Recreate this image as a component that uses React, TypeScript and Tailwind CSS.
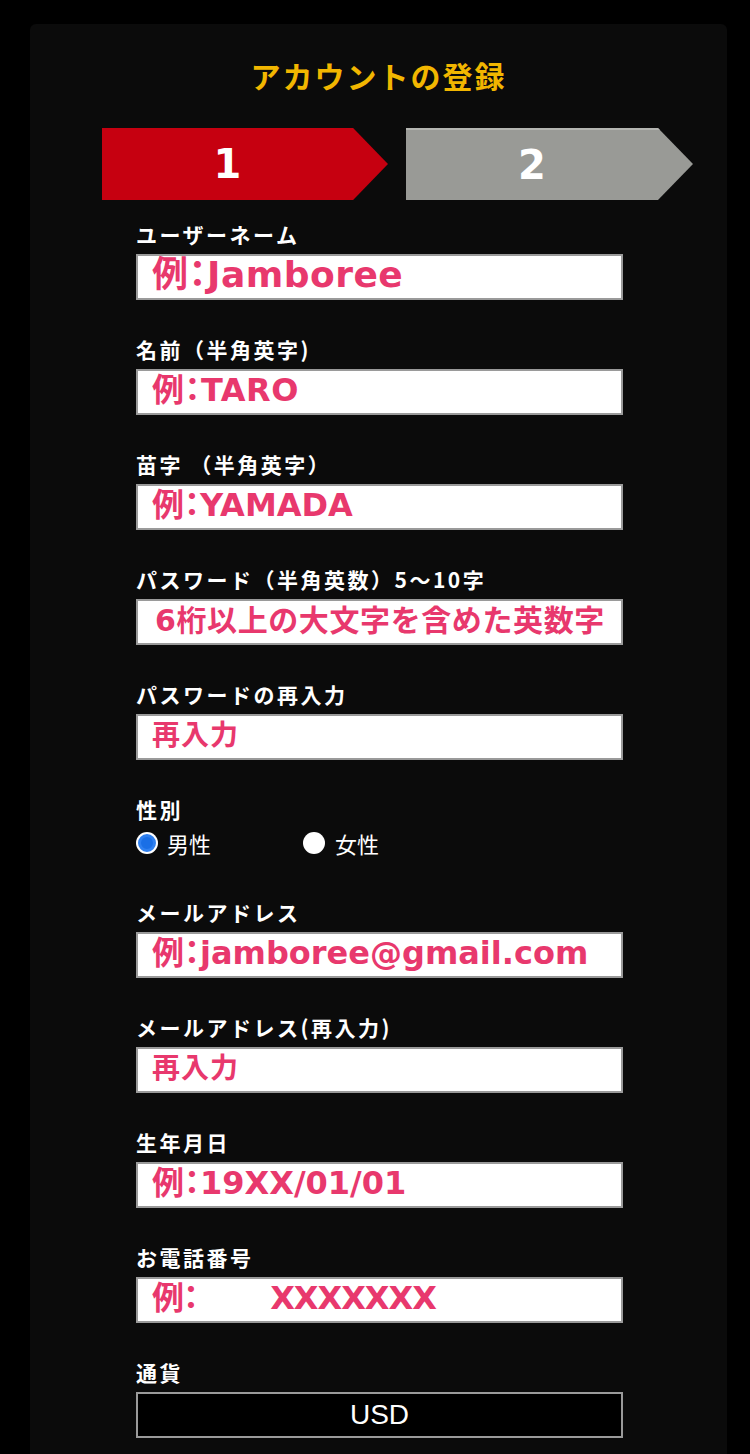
import React from 'react';

const labelCls =
  "block h-[24px] leading-[24px] text-[21px] font-bold tracking-[2.5px] text-white font-['Noto_Sans_CJK_JP',sans-serif]";

const inputBase =
  "mt-[8px] block w-full h-[46px] bg-white border-2 border-[#9a9a9a] pl-[14px] pb-[4px] font-bold text-[#e8386d] placeholder:text-[#e8386d] outline-none font-['DejaVu_Sans','Noto_Sans_CJK_JP',sans-serif]";

interface FieldProps {
  label: string;
  placeholder: string;
  size: string;
  first?: boolean;
  type?: string;
}

function Field({ label, placeholder, size, first, type = 'text' }: FieldProps) {
  return (
    <div className={first ? '' : 'mt-[37px]'}>
      <label className={labelCls}>{label}</label>
      <input type={type} placeholder={placeholder} className={`${inputBase} ${size}`} />
    </div>
  );
}

export default function App() {
  return (
    <div className="min-h-screen bg-black pt-[24px] pl-[30px] pr-[23px]">
      <div className="bg-[#0b0b0b] rounded-md pt-[33px] pb-[40px] min-h-[1430px]">
        {/* Title */}
        <h1 className="text-center text-[30px] leading-[36px] font-bold tracking-[2px] text-[#f2b600] font-['Noto_Sans_CJK_JP',sans-serif]">
          アカウントの登録
        </h1>

        {/* Steps */}
        <div className="mt-[35px] flex gap-[18px] pl-[72px]">
          <div className="w-[286px] h-[72px] bg-[#c60010] pr-[35px] flex items-center justify-center [clip-path:polygon(0_0,87.8%_0,100%_50%,87.8%_100%,0_100%)]">
            <span className="text-[40px] font-bold text-white font-['DejaVu_Sans',sans-serif]">1</span>
          </div>
          <div className="w-[287px] h-[72px] bg-[#999a96] border-t-2 border-[#b4b5b1] pr-[35px] flex items-center justify-center [clip-path:polygon(0_0,87.8%_0,100%_50%,87.8%_100%,0_100%)]">
            <span className="text-[40px] font-bold text-white font-['DejaVu_Sans',sans-serif]">2</span>
          </div>
        </div>

        {/* Form */}
        <form className="mt-[22px] ml-[106px] w-[487px]">
          <Field first label="ユーザーネーム" placeholder="例：Jamboree" size="text-[36px] tracking-[0.5px] [font-feature-settings:'palt']" />
          <Field label="名前（半角英字)" placeholder="例：TARO" size="text-[32px] tracking-[0.5px] [font-feature-settings:'palt']" />
          <Field label="苗字 （半角英字）" placeholder="例：YAMADA" size="text-[32px] [font-feature-settings:'palt']" />
          <Field label="パスワード（半角英数）5～10字" placeholder="6桁以上の大文字を含めた英数字" size="text-[30px] tracking-[0.6px] pl-[17px]" type="password" />
          <Field label="パスワードの再入力" placeholder="再入力" size="text-[28px] tracking-[1px]" type="password" />

          {/* Gender */}
          <div className="mt-[37px]">
            <span className={labelCls}>性別</span>
            <div className="mt-[10px] flex items-center h-[24px] text-[22px] text-white font-['Noto_Sans_CJK_JP',sans-serif]">
              <span className="w-[22px] h-[22px] rounded-full bg-white p-[2px]">
                <span className="block w-full h-full rounded-full bg-[#1a6fe6] border-[3px] border-[#2f80f0]" />
              </span>
              <span className="ml-[9px] w-[136px]">男性</span>
              <span className="w-[22px] h-[22px] rounded-full bg-white" />
              <span className="ml-[10px]">女性</span>
            </div>
          </div>

          <div className="mt-[45px]">
            <label className={labelCls}>メールアドレス</label>
            <input type="email" placeholder="例：jamboree@gmail.com" className={`${inputBase} text-[32px] [font-feature-settings:'palt']`} />
          </div>
          <Field label="メールアドレス(再入力)" placeholder="再入力" size="text-[28px] tracking-[1px]" />
          <Field label="生年月日" placeholder="例：19XX/01/01" size="text-[32px] [font-feature-settings:'palt']" />
          <Field label="お電話番号" placeholder={'例：\u3000\u3000\u00a0XXXXXXX'} size="text-[32px] tracking-[-1px] [font-feature-settings:'palt']" />

          {/* Currency */}
          <div className="mt-[37px]">
            <label className={labelCls}>通貨</label>
            <div className="mt-[8px] h-[46px] border-2 border-[#9a9a9a] bg-black flex items-center justify-center text-[28px] text-white font-['Liberation_Sans',sans-serif]">
              USD
            </div>
          </div>
        </form>
      </div>
    </div>
  );
}
